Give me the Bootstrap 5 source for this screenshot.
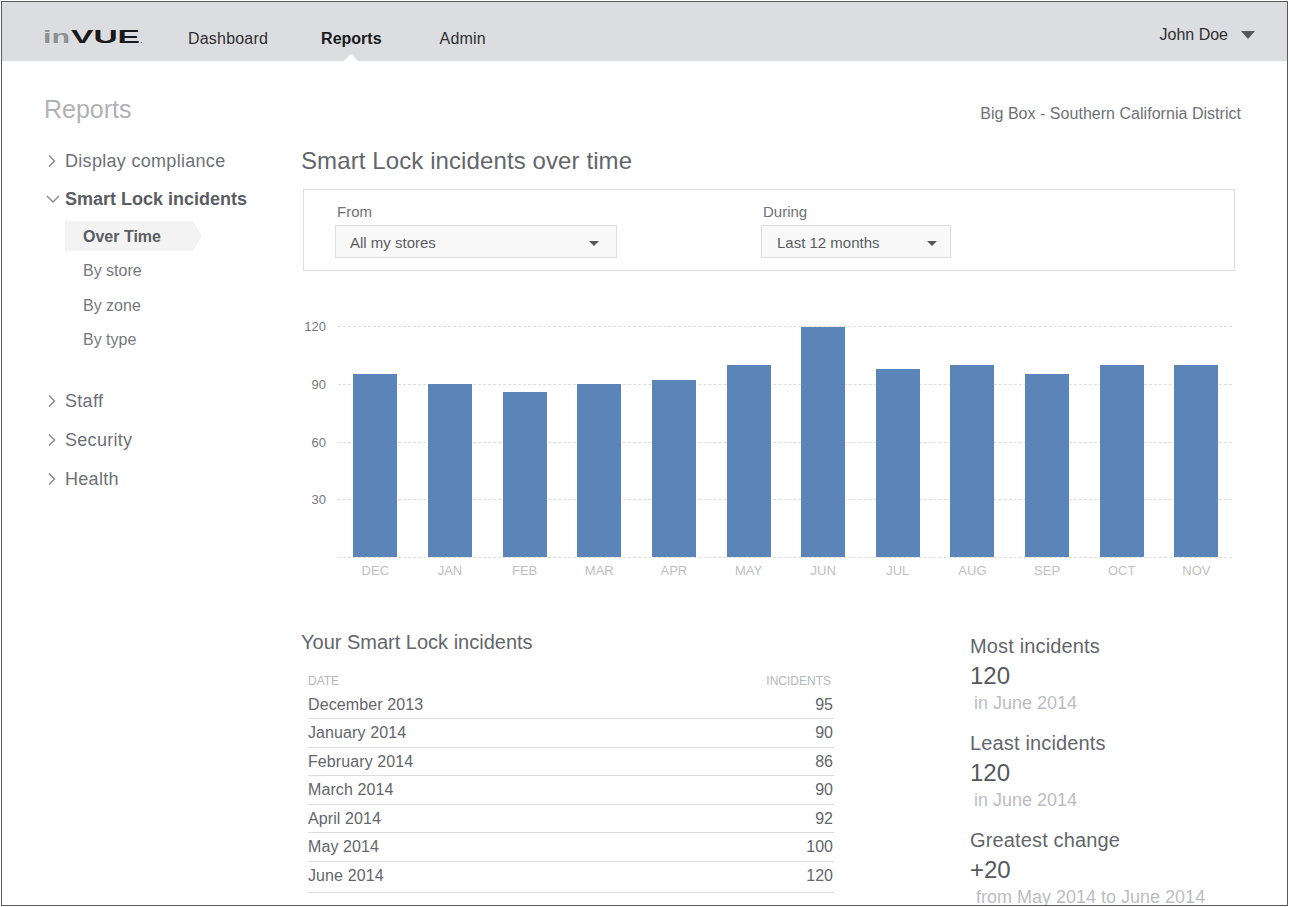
<!DOCTYPE html>
<html lang="en"><head><meta charset="utf-8"><title>Reports</title>
<link href="https://cdn.jsdelivr.net/npm/bootstrap@5.3.0/dist/css/bootstrap.min.css" rel="stylesheet">
<style>
html,body{height:907px;overflow:hidden;background:#fff}
body{font-family:"Liberation Sans",Arial,sans-serif;color:#5a5d62}
.shell{margin:1px 1px 0 1px;width:1287px;height:905px;border:1px solid #58595b;overflow:hidden;background:#fff}
.topbar{height:59px;background:#dcdde0;padding:0 32px 0 41px;align-items:flex-start;flex-wrap:nowrap}
.brand-logo{display:block;margin-top:17px;overflow:visible}
.topbar .navbar-nav .nav-link{color:#2f2f31;font-size:16px;padding:0;line-height:20px;margin-top:27px;position:relative;letter-spacing:.2px}
.topbar .nav-item.first{margin-left:45px}
.topbar .nav-item.second{margin-left:53px}
.topbar .nav-item.third{margin-left:58px}
.topbar .navbar-nav .nav-link.active{color:#1a1a1c;font-weight:700;letter-spacing:0}
.topbar .nav-link.active::after{content:"";position:absolute;left:50%;margin-left:-9px;top:25px;border:9px solid transparent;border-top:0;border-bottom-color:#fff}
.user-menu{color:#2f2f31;font-size:16px;line-height:20px;margin-top:23px;gap:13px}
.tri{display:inline-block;width:0;height:0;border-style:solid;border-color:#55575b transparent transparent;}
.tri-lg{border-width:8px 7px 0}
.tri-sm{border-width:5px 5px 0}
.content-wrap{padding:0 45px 0 42px}
.side-col{width:257px;flex:none;padding-top:33px}
.side-title{font-size:25px;font-weight:400;color:#b0b2b5;margin:0;line-height:30px}
.side-nav{margin-top:17px;list-style:none;padding:0}
.side-item{font-size:18px;line-height:22px;color:#6e7176;display:flex;align-items:center;gap:8px;height:39px;letter-spacing:.3px}
.side-item.open{font-weight:700;color:#5a5d62;letter-spacing:0;height:37px}
.side-item svg{flex:none;margin-left:1px}
.side-item svg.chev-open{margin-right:-3px}
.sub-list{list-style:none;padding:0;margin:4px 0 24px 21px;width:137px}
.sub-list li{font-size:16px;line-height:20px;height:34.5px;padding:7px 0 0 18px;color:#76797d}
.sub-list li.current{font-weight:700;color:#5a5d62;background:#f3f3f4;height:30px;margin-bottom:3px;padding-top:6px;clip-path:polygon(0 0,128px 0,137px 50%,128px 100%,0 100%)}
.main-col{flex:1;min-width:0;position:relative}
.district{text-align:right;font-size:16px;line-height:20px;color:#6e7176;padding-top:43px;margin-right:1px;letter-spacing:.03px}
.page-title{font-size:24px;line-height:28px;font-weight:400;margin:23px 0 14px;color:#63666b;letter-spacing:.1px}
.filter-box{margin-left:2px;margin-right:7px;height:82px;border:1px solid #dcdddf;padding:13px 31px 0;gap:144px}
.filter-label{font-size:15px;line-height:18px;color:#6e7176;padding-left:2px;margin-bottom:4px}
.picker{height:33px;background:#f9f9f9;border:1px solid #dcdddf;font-size:15px;color:#5a5d62;align-items:center;justify-content:space-between}
.picker-a{width:282px;padding:4px 17px 0 14px}.picker-b{width:190px;padding:4px 13px 0 15px}
.chart-area{position:relative;height:276px;margin-top:55px;margin-right:10px}
.axis-row{position:absolute;left:0;right:0;height:0;display:flex;align-items:center}
.axis-num{width:25px;text-align:right;font-size:13px;color:#76797d;line-height:14px;flex:none;margin-top:2px}
.axis-dash{flex:1;margin-left:12px;border-top:1px dashed #dcdddf;height:0}
.plot{position:absolute;left:37px;top:0;width:895.7px;height:231px;display:grid;grid-template-columns:repeat(12,1fr);align-items:end;justify-items:center}
.plot i{display:block;width:44px;background:#5b85b8}
.months{position:absolute;left:37px;top:237px;width:895.7px;display:grid;grid-template-columns:repeat(12,1fr);text-align:center;font-size:13px;line-height:16px;color:#bfc0c2}
.lower{margin-top:28px}
.table-col{width:669px;flex:none}
.sec-title{font-size:20px;line-height:24px;color:#63666b;font-weight:400;margin:0 0 20px}
.inc-table{width:526px;margin:0 0 0 7px;--bs-table-color:#63666b;--bs-table-border-color:#dcdddf;font-size:16px}
.inc-table th{font-weight:400;font-size:12px;line-height:14px;color:#b5b7b9;padding:0 0 2px;border:0}
.inc-table td{padding:0;height:28.5px;line-height:27px;vertical-align:middle}
.inc-table td:first-child{letter-spacing:.1px}
.inc-table tr:last-child td{height:31.5px;padding-bottom:3px}
.inc-table th:last-child{padding-right:3px}
.inc-table td:last-child,.inc-table th:last-child{text-align:right}
.inc-table td:last-child{padding-right:1px}
.stat-col{padding-top:4px}
.stat-block{height:97px}
.stat-name{font-size:20px;line-height:24px;color:#63666b;letter-spacing:.15px}
.stat-val{font-size:24px;line-height:30px;color:#55585d;margin-top:3px}
.stat-note{font-size:18px;line-height:22px;color:#bcbdbf;padding-left:4px;margin-top:1px}
.stat-note.wide{padding-left:6px}
</style></head><body>
<div class="shell">
<nav class="navbar navbar-expand topbar">
  <svg class="brand-logo" width="100" height="26" viewBox="0 0 100 26" role="img" aria-label="InVue"><text x="0" y="24" font-family="Liberation Sans" font-weight="700" font-size="19" fill="#8f9092" textLength="27" lengthAdjust="spacingAndGlyphs">in</text><text x="28" y="24" font-family="Liberation Sans" font-weight="700" font-size="19" fill="#19191b" textLength="69" lengthAdjust="spacingAndGlyphs">VUE</text><circle cx="98.5" cy="23.5" r=".6" fill="#77787a"/></svg>
  <ul class="navbar-nav">
    <li class="nav-item first"><a class="nav-link" href="#">Dashboard</a></li>
    <li class="nav-item second"><a class="nav-link active" href="#">Reports</a></li>
    <li class="nav-item third"><a class="nav-link" href="#">Admin</a></li>
  </ul>
  <div class="d-flex align-items-center ms-auto user-menu"><span>John Doe</span><span class="tri tri-lg"></span></div>
</nav>
<div class="d-flex content-wrap">
  <aside class="side-col">
    <h2 class="side-title">Reports</h2>
    <ul class="side-nav">
      <li class="side-item"><svg width="12" height="14" viewBox="0 0 12 14"><path d="M4 1.5l5.5 5.5-5.5 5.5" fill="none" stroke="#85878a" stroke-width="1.4"/></svg>Display compliance</li>
      <li class="side-item open"><svg class="chev-open" width="15" height="10" viewBox="0 0 15 10"><path d="M2 2l6 6 6-6" fill="none" stroke="#85878a" stroke-width="1.3"/></svg>Smart Lock incidents</li>
      <li><ul class="sub-list"><li class="current">Over Time</li><li>By store</li><li>By zone</li><li>By type</li></ul></li>
      <li class="side-item"><svg width="12" height="14" viewBox="0 0 12 14"><path d="M4 1.5l5.5 5.5-5.5 5.5" fill="none" stroke="#85878a" stroke-width="1.4"/></svg>Staff</li>
      <li class="side-item"><svg width="12" height="14" viewBox="0 0 12 14"><path d="M4 1.5l5.5 5.5-5.5 5.5" fill="none" stroke="#85878a" stroke-width="1.4"/></svg>Security</li>
      <li class="side-item"><svg width="12" height="14" viewBox="0 0 12 14"><path d="M4 1.5l5.5 5.5-5.5 5.5" fill="none" stroke="#85878a" stroke-width="1.4"/></svg>Health</li>
    </ul>
  </aside>
  <main class="main-col">
    <div class="district">Big Box - Southern California District</div>
    <h1 class="page-title">Smart Lock incidents over time</h1>
    <div class="d-flex filter-box">
      <div><div class="filter-label">From</div><div class="d-flex picker picker-a"><span>All my stores</span><span class="tri tri-sm"></span></div></div>
      <div><div class="filter-label">During</div><div class="d-flex picker picker-b"><span>Last 12 months</span><span class="tri tri-sm"></span></div></div>
    </div>
    <div class="chart-area">
      <div class="axis-row" style="top:0"><span class="axis-num">120</span><span class="axis-dash"></span></div>
      <div class="axis-row" style="top:58px"><span class="axis-num">90</span><span class="axis-dash"></span></div>
      <div class="axis-row" style="top:116px"><span class="axis-num">60</span><span class="axis-dash"></span></div>
      <div class="axis-row" style="top:173px"><span class="axis-num">30</span><span class="axis-dash"></span></div>
      <div class="axis-row" style="top:231px"><span class="axis-num"></span><span class="axis-dash"></span></div>
      <div class="plot">
        <i style="height:183px"></i><i style="height:173px"></i><i style="height:165px"></i><i style="height:173px"></i><i style="height:177px"></i><i style="height:192px"></i><i style="height:230px"></i><i style="height:188px"></i><i style="height:192px"></i><i style="height:183px"></i><i style="height:192px"></i><i style="height:192px"></i>
      </div>
      <div class="months"><span>DEC</span><span>JAN</span><span>FEB</span><span>MAR</span><span>APR</span><span>MAY</span><span>JUN</span><span>JUL</span><span>AUG</span><span>SEP</span><span>OCT</span><span>NOV</span></div>
    </div>
    <div class="d-flex lower">
      <section class="table-col">
        <h2 class="sec-title">Your Smart Lock incidents</h2>
        <table class="table inc-table">
          <thead><tr><th>DATE</th><th>INCIDENTS</th></tr></thead>
          <tbody>
          <tr><td>December 2013</td><td>95</td></tr>
          <tr><td>January 2014</td><td>90</td></tr>
          <tr><td>February 2014</td><td>86</td></tr>
          <tr><td>March 2014</td><td>90</td></tr>
          <tr><td>April 2014</td><td>92</td></tr>
          <tr><td>May 2014</td><td>100</td></tr>
          <tr><td>June 2014</td><td>120</td></tr>
          </tbody>
        </table>
      </section>
      <section class="stat-col">
        <div class="stat-block"><div class="stat-name">Most incidents</div><div class="stat-val">120</div><div class="stat-note">in June 2014</div></div>
        <div class="stat-block"><div class="stat-name">Least incidents</div><div class="stat-val">120</div><div class="stat-note">in June 2014</div></div>
        <div class="stat-block"><div class="stat-name">Greatest change</div><div class="stat-val">+20</div><div class="stat-note wide">from May 2014 to June 2014</div></div>
      </section>
    </div>
  </main>
</div>
</div>
<script src="https://cdn.jsdelivr.net/npm/bootstrap@5.3.0/dist/js/bootstrap.bundle.min.js"></script>
</body></html>
